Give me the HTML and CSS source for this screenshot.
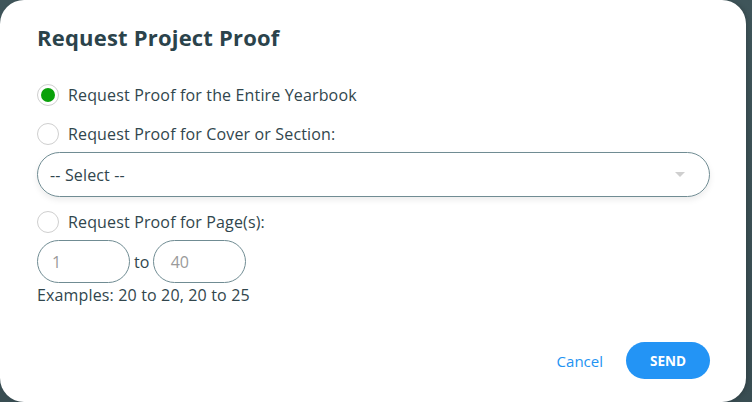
FILE: index.html
```html
<!DOCTYPE html>
<html>
<head>
<meta charset="utf-8">
<link rel="stylesheet" href="styles.css">
</head>
<body>
<div class="modal">
  <h1 class="title">Request Project Proof</h1>
  <label class="option">
    <span class="radio checked"><span class="dot"></span></span>
    <span class="label-text">Request Proof for the Entire Yearbook</span>
  </label>
  <label class="option opt2">
    <span class="radio"></span>
    <span class="label-text">Request Proof for Cover or Section:</span>
  </label>
  <div class="select">
    <span class="select-text">-- Select --</span>
    <span class="caret"></span>
  </div>
  <label class="option opt3">
    <span class="radio"></span>
    <span class="label-text">Request Proof for Page(s):</span>
  </label>
  <div class="range">
    <div class="field"><span class="ph">1</span></div>
    <span class="to">to</span>
    <div class="field"><span class="ph">40</span></div>
  </div>
  <div class="examples">Examples: 20 to 20, 20 to 25</div>
  <div class="actions">
    <span class="cancel">Cancel</span>
    <span class="send">SEND</span>
  </div>
</div>
</body>
</html>
```

FILE: styles.css
```css
html, body {
  margin: 0;
  padding: 0;
}
body {
  width: 752px;
  height: 402px;
  background: linear-gradient(180deg, #3f555a 0%, #394d52 100%);
  font-family: "Open Sans", "Liberation Sans", sans-serif;
  color: #2d4249;
  overflow: hidden;
}
.modal {
  box-sizing: border-box;
  width: 746px;
  height: 402px;
  background: #fff;
  border-radius: 24px;
  padding: 23px 36px 0 37px;
  display: flex;
  flex-direction: column;
  box-shadow: 2px 0 4px rgba(0,0,0,0.15);
}
.title {
  margin: 0;
  font-size: 22px;
  font-weight: 700;
  letter-spacing: 0.2px;
  line-height: 28px;
  color: #2b434b;
}
.option {
  display: flex;
  align-items: center;
  gap: 9px;
  margin-top: 33px;
  height: 22px;
}
.opt2 { margin-top: 17px; }
.opt3 { margin-top: 14px; }
.radio {
  box-sizing: border-box;
  width: 22px;
  height: 22px;
  border-radius: 50%;
  border: 1px solid #cfcfcf;
  background: #fff;
  display: flex;
  align-items: center;
  justify-content: center;
  flex: none;
}
.dot {
  width: 14px;
  height: 14px;
  border-radius: 50%;
  background: #0aa10a;
}
.label-text,
.select-text,
.to,
.examples {
  font-size: 16px;
  letter-spacing: 0.15px;
  color: #31464d;
}
.select {
  box-sizing: border-box;
  margin-top: 7px;
  width: 673px;
  height: 45px;
  border: 1px solid #708c93;
  border-radius: 23px;
  display: flex;
  align-items: center;
  justify-content: space-between;
  padding: 0 24px 0 12px;
  box-shadow: 0 3px 6px rgba(0,0,0,0.08);
}
.caret {
  width: 0;
  height: 0;
  border-left: 5px solid transparent;
  border-right: 5px solid transparent;
  border-top: 5px solid #cfcfcf;
}
.range {
  display: flex;
  align-items: center;
  margin-top: 7px;
}
.field {
  box-sizing: border-box;
  width: 93px;
  height: 43px;
  border: 1px solid #708c93;
  border-radius: 22px;
  display: flex;
  align-items: center;
  padding-left: 14px;
}
.field + .to + .field { padding-left: 17px; }
.ph {
  font-size: 16px;
  color: #9a9a9a;
}
.to {
  margin: 0 3px 0 4px;
}
.examples {
  margin-top: 1px;
  line-height: 22px;
}
.actions {
  display: flex;
  align-items: center;
  justify-content: flex-end;
  margin-top: 36px;
  gap: 23px;
}
.cancel {
  font-size: 15px;
  color: #2393f2;
}
.send {
  width: 84px;
  height: 37px;
  border-radius: 19px;
  background: #2394f5;
  color: #fff;
  font-weight: 700;
  font-size: 13.5px;
  display: flex;
  align-items: center;
  justify-content: center;
}
```
